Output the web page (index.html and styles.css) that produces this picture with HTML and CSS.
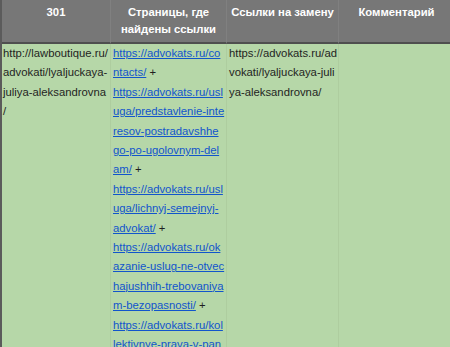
FILE: index.html
```html
<!DOCTYPE html>
<html>
    <head>
        <meta charset="utf-8">
        <meta name="viewport" content="width=device-width" />
        <link rel="stylesheet" href="styles.css">
    </head>
    <body>
        <div class="sheet">
            <div class="hd c-old">301</div>
            <div class="hd c-pages">Страницы, где найдены ссылки</div>
            <div class="hd c-new">Ссылки на замену</div>
            <div class="hd c-note">Комментарий</div>

            <div class="cell c-old">http://lawboutique.ru/advokati/lyaljuckaya-juliya-aleksandrovna/</div>
            <div class="cell c-pages">
                <a href="#">https://advokats.ru/contacts/</a> +<br>
                <a href="#">https://advokats.ru/usluga/predstavlenie-interesov-postradavshhego-po-ugolovnym-delam/</a> +<br>
                <a href="#">https://advokats.ru/usluga/lichnyj-semejnyj-advokat/</a> +<br>
                <a href="#">https://advokats.ru/okazanie-uslug-ne-otvechajushhih-trebovaniyam-bezopasnosti/</a> +<br>
                <a href="#">https://advokats.ru/kollektivnye-prava-v-pandemiyu/</a>
            </div>
            <div class="cell c-new">https://advokats.ru/advokati/lyaljuckaya-juliya-aleksandrovna/</div>
            <div class="cell c-note"></div>
        </div>
    </body>
</html>
```

FILE: styles.css
```css
html, body {margin: 0; padding: 0; overflow: hidden; background: #b6d7a8;}
body {font-family: "Liberation Sans", Arial, sans-serif; font-size: 11.3px; color: #1f1f1f;}

/* sheet export: 4 columns, grey header, green row */
.sheet {display: grid; grid-template-columns: 108px 116px 112px 116px; width: max-content;
    border-left: 2px solid #5b5b5b;}
.sheet > div {box-sizing: border-box; border-left: 1px solid #aecd9f;}
.sheet > .c-old {border-left: 0;}

.hd {background: #777777; color: #ffffff; font-weight: bold; text-align: center;
    height: 44px; padding: 4px 3px 0; line-height: 17px;
    border-bottom: 2px solid #4f4f4f;}
.sheet > .hd {border-left-color: #808080;}

.cell {padding: 0 1.5px 0 2px; line-height: 19.4px; word-break: break-all; min-height: 320px;}
.cell.c-old {padding: 0 1px 0 1px; line-break: anywhere;}
.cell.c-new {padding-right: 0;}

.cell a {color: #1155cc; text-decoration: underline;}
```
